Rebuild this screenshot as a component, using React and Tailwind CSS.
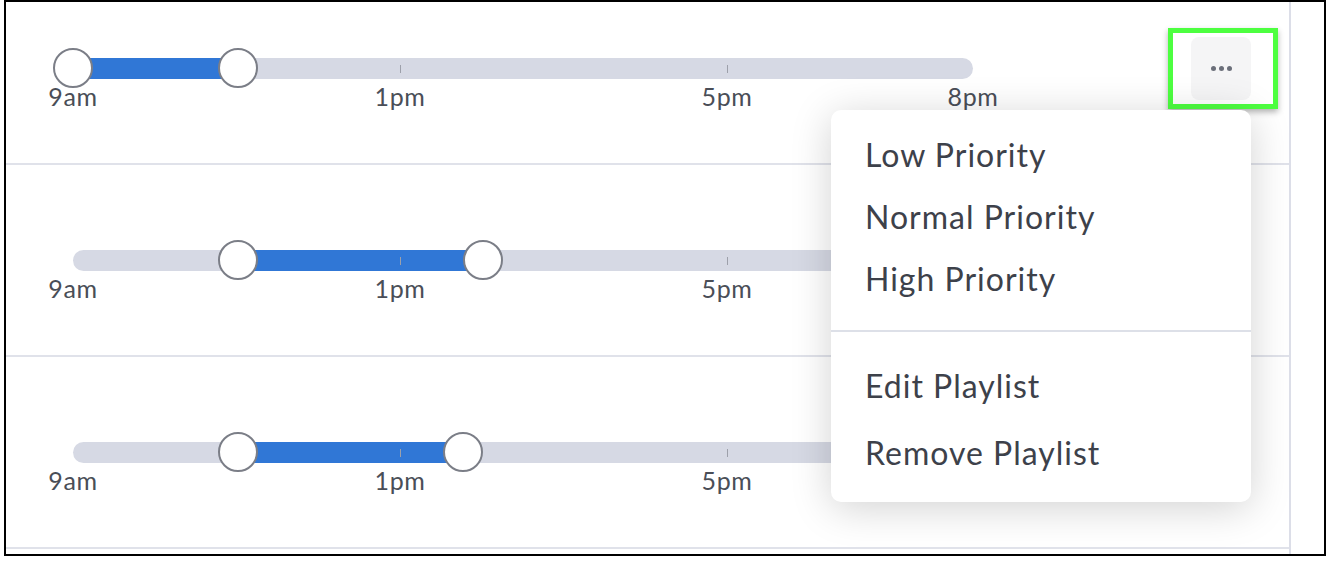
import React from 'react';

const LABELS = [
  { text: '9am', at: 0 },
  { text: '1pm', at: 327 },
  { text: '5pm', at: 654 },
  { text: '8pm', at: 900 },
];

const TICKS = [327, 654];

const rows = [
  { id: 'r1', from: 0, to: 165 },
  { id: 'r2', from: 165, to: 410 },
  { id: 'r3', from: 165, to: 390 },
];

function Thumb({ at }) {
  return (
    <div
      className="absolute top-0 h-10 w-10 -translate-x-1/2 rounded-full border-2 border-[#7b7e87] bg-white"
      style={{ left: at }}
    />
  );
}

function RangeSlider({ from, to, className }) {
  return (
    <div className={`relative ml-[67px] h-10 w-[900px] shrink-0 ${className}`}>
      {/* rail */}
      <div className="absolute left-0 top-[10px] h-[21px] w-full rounded-full bg-[#d6d9e4]" />
      {/* selected range */}
      <div className="absolute top-[10px] h-[21px] bg-[#3077d6]" style={{ left: from, width: to - from }} />
      {TICKS.map((t) => (
        <div key={t} className="absolute top-[17px] h-[8px] w-px bg-[#9da0aa]" style={{ left: t }} />
      ))}
      <Thumb at={from} />
      <Thumb at={to} />
      {LABELS.map((l) => (
        <span
          key={l.text}
          className="absolute top-[36px] -translate-x-1/2 text-[25px] leading-none tracking-[0.6px] text-[#4a4e57]"
          style={{ left: l.at }}
        >
          {l.text}
        </span>
      ))}
    </div>
  );
}

function MoreButton() {
  return (
    <div className="relative z-10 mr-[38px] mt-[35px]">
      <div className="absolute -left-[23px] -top-[9px] h-[81px] w-[110px] border-[5px] border-[#4dff40] shadow-[0_3px_6px_rgba(0,0,0,0.3)]" />
      <button className="relative flex h-[63px] w-[60px] items-center justify-center gap-[3px] rounded-lg bg-[#f5f5f6]">
        <span className="h-[5px] w-[5px] rounded-full bg-[#6b6f7a]" />
        <span className="h-[5px] w-[5px] rounded-full bg-[#6b6f7a]" />
        <span className="h-[5px] w-[5px] rounded-full bg-[#6b6f7a]" />
      </button>
    </div>
  );
}

function Menu() {
  const top = ['Low Priority', 'Normal Priority', 'High Priority'];
  const bottom = ['Edit Playlist', 'Remove Playlist'];
  return (
    <div className="absolute left-[825px] top-[108px] z-20 w-[420px] rounded-[10px] bg-white pb-[16px] pt-[14px] text-[32px] tracking-[1px] text-[#3d414a] shadow-[0_6px_40px_rgba(0,0,0,0.18)]">
      <ul>
        {top.map((t) => (
          <li key={t} className="flex h-[62px] items-center pl-[34px]">
            {t}
          </li>
        ))}
      </ul>
      <div className="my-[20px] h-[2px] bg-[#dde0e8]" />
      <ul>
        {bottom.map((t) => (
          <li key={t} className="flex h-[67px] items-center pl-[34px]">
            {t}
          </li>
        ))}
      </ul>
    </div>
  );
}

export default function App() {
  return (
    <div className="h-[564px] w-[1330px] bg-white" style={{ fontFamily: 'Lato, "Open Sans", sans-serif' }}>
      <div className="ml-[4px] flex h-[556px] w-[1322px] border-2 border-black">
        <div className="relative w-[1283px] overflow-hidden">
          {rows.map((r, i) => (
            <div
              key={r.id}
              className={
                i === 0
                  ? 'flex h-[163px] items-start justify-between border-b-2 border-[#e0e2ea]'
                  : 'flex h-[192px] items-start border-b-2 border-[#e0e2ea]'
              }
            >
              <RangeSlider from={r.from} to={r.to} className={i === 0 ? 'mt-[46px]' : 'mt-[75px]'} />
              {i === 0 && <MoreButton />}
            </div>
          ))}
          <Menu />
        </div>
        <div className="w-[2px] bg-[#dcdee8]" />
      </div>
    </div>
  );
}
